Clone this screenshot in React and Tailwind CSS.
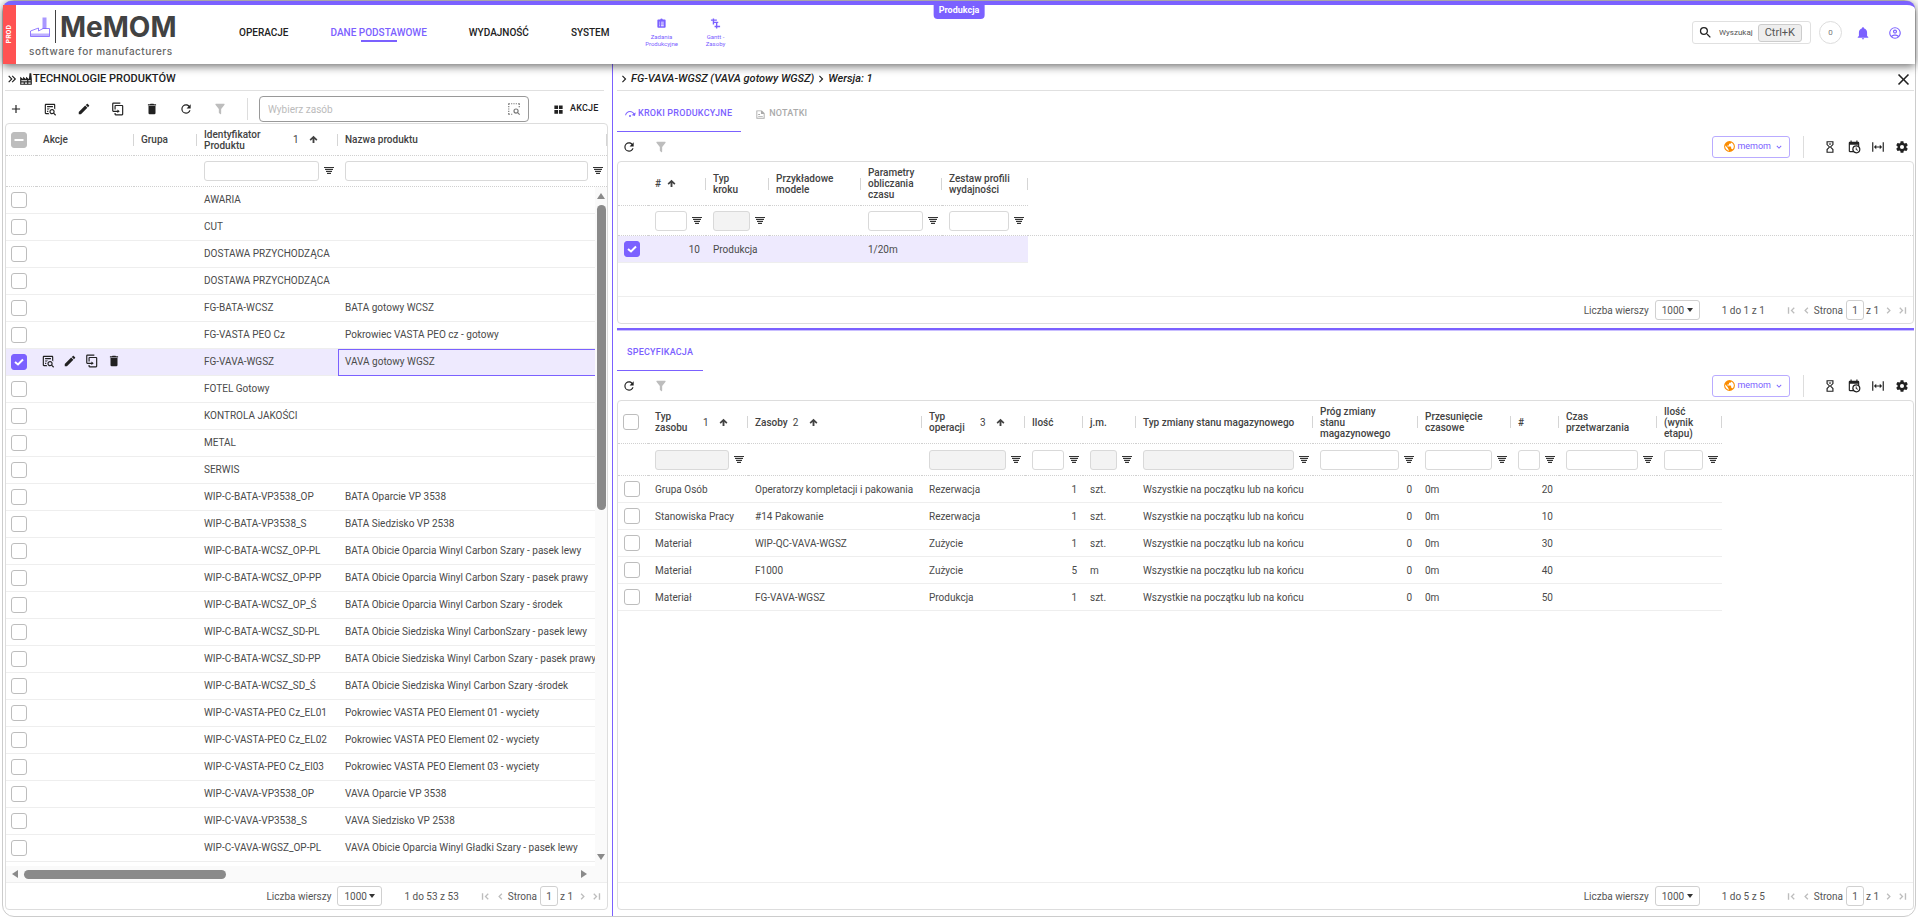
import React, { useState } from 'react';
import clsx from 'clsx';

const icons = {
  plus: 'M19,13H13V19H11V13H5V11H11V5H13V11H19V13Z',
  details:
    'M15.5,12C18,12 20,14 20,16.5C20,17.38 19.75,18.21 19.31,18.9L22.39,22L21,23.39L17.88,20.32C17.19,20.75 16.37,21 15.5,21C13,21 11,19 11,16.5C11,14 13,12 15.5,12M15.5,14A2.5,2.5 0 0,0 13,16.5A2.5,2.5 0 0,0 15.5,19A2.5,2.5 0 0,0 18,16.5A2.5,2.5 0 0,0 15.5,14M5,3H19C20.11,3 21,3.89 21,5V13.03C20.5,12.23 19.81,11.54 19,11V5H5V19H9.5C9.81,19.75 10.26,20.42 10.81,21H5C3.89,21 3,20.11 3,19V5C3,3.89 3.89,3 5,3M7,7H17V9H7V7M7,11H12.03C11.23,11.5 10.54,12.19 10,13H7V11M7,15H9.17C9.06,15.5 9,16 9,16.5V17H7V15Z',
  pencil:
    'M20.71,7.04C21.1,6.65 21.1,6 20.71,5.63L18.37,3.29C18,2.9 17.35,2.9 16.96,3.29L15.12,5.12L18.87,8.87M3,17.25V21H6.75L17.81,9.93L14.06,6.18L3,17.25Z',
  duplicate:
    'M11,17H4A2,2 0 0,1 2,15V3A2,2 0 0,1 4,1H16V3H4V15H11V13L15,16L11,19V17M19,21V7H8V13H6V7A2,2 0 0,1 8,5H19A2,2 0 0,1 21,7V21A2,2 0 0,1 19,23H8A2,2 0 0,1 6,21V19H8V21H19Z',
  trash: 'M19,4H15.5L14.5,3H9.5L8.5,4H5V6H19M6,19A2,2 0 0,0 8,21H16A2,2 0 0,0 18,19V7H6V19Z',
  refresh:
    'M17.65,6.35C16.2,4.9 14.21,4 12,4A8,8 0 0,0 4,12A8,8 0 0,0 12,20C15.73,20 18.84,17.45 19.73,14H17.65C16.83,16.33 14.61,18 12,18A6,6 0 0,1 6,12A6,6 0 0,1 12,6C13.66,6 15.14,6.69 16.22,7.78L13,11H20V4L17.65,6.35Z',
  filter:
    'M14,12V19.88C14.04,20.18 13.94,20.5 13.71,20.71C13.32,21.1 12.69,21.1 12.3,20.71L10.29,18.7C10.06,18.47 9.96,18.16 10,17.87V12H9.97L4.21,4.62C3.87,4.19 3.95,3.56 4.38,3.22C4.57,3.08 4.78,3 5,3H19C19.22,3 19.43,3.08 19.62,3.22C20.05,3.56 20.13,4.19 19.79,4.62L14.03,12H14Z',
  factory:
    'M4,18V20H8V18H4M4,14V16H14V14H4M10,18V20H14V18H10M16,14V16H20V14H16M16,18V20H20V18H16M2,22V8L7,12V8L12,12V8L17,12L18,2H21L22,12V22H2Z',
  bell: 'M21,19V20H3V19L5,17V11C5,7.9 7.03,5.17 10,4.29C10,4.19 10,4.1 10,4A2,2 0 0,1 12,2A2,2 0 0,1 14,4C14,4.1 14,4.19 14,4.29C16.97,5.17 19,7.9 19,11V17L21,19M14,21A2,2 0 0,1 12,23A2,2 0 0,1 10,21',
  account:
    'M12,2A10,10 0 0,0 2,12A10,10 0 0,0 12,22A10,10 0 0,0 22,12A10,10 0 0,0 12,2M7.07,18.28C7.5,17.38 10.12,16.5 12,16.5C13.88,16.5 16.5,17.38 16.93,18.28C15.57,19.36 13.86,20 12,20C10.14,20 8.43,19.36 7.07,18.28M18.36,16.83C16.93,15.09 13.46,14.5 12,14.5C10.54,14.5 7.07,15.09 5.64,16.83C4.62,15.5 4,13.82 4,12C4,7.59 7.59,4 12,4C16.41,4 20,7.59 20,12C20,13.82 19.38,15.5 18.36,16.83M12,6C10.06,6 8.5,7.56 8.5,9.5C8.5,11.44 10.06,13 12,13C13.94,13 15.5,11.44 15.5,9.5C15.5,7.56 13.94,6 12,6M12,11A1.5,1.5 0 0,1 10.5,9.5A1.5,1.5 0 0,1 12,8A1.5,1.5 0 0,1 13.5,9.5A1.5,1.5 0 0,1 12,11Z',
  cog: 'M12,15.5A3.5,3.5 0 0,1 8.5,12A3.5,3.5 0 0,1 12,8.5A3.5,3.5 0 0,1 15.5,12A3.5,3.5 0 0,1 12,15.5M19.43,12.97C19.47,12.65 19.5,12.33 19.5,12C19.5,11.67 19.47,11.34 19.43,11L21.54,9.37C21.73,9.22 21.78,8.95 21.66,8.73L19.66,5.27C19.54,5.05 19.27,4.96 19.05,5.05L16.56,6.05C16.04,5.66 15.5,5.32 14.87,5.07L14.5,2.42C14.46,2.18 14.25,2 14,2H10C9.75,2 9.54,2.18 9.5,2.42L9.13,5.07C8.5,5.32 7.96,5.66 7.44,6.05L4.95,5.05C4.73,4.96 4.46,5.05 4.34,5.27L2.34,8.73C2.21,8.95 2.27,9.22 2.46,9.37L4.57,11C4.53,11.34 4.5,11.67 4.5,12C4.5,12.33 4.53,12.65 4.57,12.97L2.46,14.63C2.27,14.78 2.21,15.05 2.34,15.27L4.34,18.73C4.46,18.95 4.73,19.03 4.95,18.95L7.44,17.94C7.96,18.34 8.5,18.68 9.13,18.93L9.5,21.58C9.54,21.82 9.75,22 10,22H14C14.25,22 14.46,21.82 14.5,21.58L14.87,18.93C15.5,18.67 16.04,18.34 16.56,17.94L19.05,18.95C19.27,19.03 19.54,18.95 19.66,18.73L21.66,15.27C21.78,15.05 21.73,14.78 21.54,14.63L19.43,12.97Z',
  earth:
    'M17.9,17.39C17.64,16.59 16.89,16 16,16H15V13A1,1 0 0,0 14,12H8V10H10A1,1 0 0,0 11,9V7H13A2,2 0 0,0 15,5V4.59C17.93,5.77 20,8.64 20,12C20,14.08 19.2,15.97 17.9,17.39M11,19.93C7.05,19.44 4,16.08 4,12C4,11.38 4.08,10.78 4.21,10.21L9,15V16A2,2 0 0,0 11,18M12,2A10,10 0 0,0 2,12A10,10 0 0,0 12,22A10,10 0 0,0 22,12A10,10 0 0,0 12,2Z',
  doubleChevron:
    'M5.59,7.41L7,6L13,12L7,18L5.59,16.59L10.17,12L5.59,7.41M11.59,7.41L13,6L19,12L13,18L11.59,16.59L16.17,12L11.59,7.41Z',
  chevronRight: 'M8.59,16.58L13.17,12L8.59,7.41L10,6L16,12L10,18L8.59,16.58Z',
  chevronDown: 'M7.41,8.58L12,13.17L16.59,8.58L18,10L12,16L6,10L7.41,8.58Z',
  grid: 'M3,11H11V3H3M3,21H11V13H3M13,21H21V13H13M13,3V11H21V3',
  magnify:
    'M9.5,3A6.5,6.5 0 0,1 16,9.5C16,11.11 15.41,12.59 14.44,13.73L14.71,14H15.5L20.5,19L19,20.5L14,15.5V14.71L13.73,14.44C12.59,15.41 11.11,16 9.5,16A6.5,6.5 0 0,1 3,9.5A6.5,6.5 0 0,1 9.5,3M9.5,5C7,5 5,7 5,9.5C5,12 7,14 9.5,14C12,14 14,12 14,9.5C14,7 12,5 9.5,5Z',
  close:
    'M19,6.41L17.59,5L12,10.59L6.41,5L5,6.41L10.59,12L5,17.59L6.41,19L12,13.41L17.59,19L19,17.59L13.41,12L19,6.41Z',
  width: 'M9,11H15V8L19,12L15,16V13H9V16L5,12L9,8V11M2,20V4H4V20H2M20,20V4H22V20H20Z',
  sand: 'M6,2H18V8L14,12L18,16V22H6V16L10,12L6,8V2M16,16.5L12,12.5L8,16.5V20H16V16.5M12,11.5L16,7.5V4H8V7.5L12,11.5M10,6H14V6.75L12,8.75L10,6.75V6Z',
  calendarClock:
    'M15,13H16.5V15.82L18.94,17.23L18.19,18.53L15,16.69V13M19,8H5V19H9.67C9.24,18.09 9,17.07 9,16A7,7 0 0,1 16,9C17.07,9 18.09,9.24 19,9.67V8M5,21C3.89,21 3,20.1 3,19V5C3,3.89 3.89,3 5,3H6V1H8V3H16V1H18V3H19A2,2 0 0,1 21,5V11.1C22.24,12.36 23,14.09 23,16A7,7 0 0,1 16,23C14.09,23 12.36,22.24 11.1,21H5M16,11.15A4.85,4.85 0 0,0 11.15,16C11.15,18.68 13.32,20.85 16,20.85A4.85,4.85 0 0,0 20.85,16C20.85,13.32 18.68,11.15 16,11.15Z',
  stepOver:
    'M12,14A2,2 0 0,1 14,16A2,2 0 0,1 12,18A2,2 0 0,1 10,16A2,2 0 0,1 12,14M23.46,8.86L21.87,15.75L15,14.16L18.8,11.78C17.39,9.5 14.87,8 12,8C8.05,8 4.77,10.86 4.12,14.63L2.15,14.28C2.96,9.58 7.06,6 12,6C15.58,6 18.73,7.89 20.5,10.72L23.46,8.86Z',
  note: 'M3,3H15L21,9V21H3V3M5,5V19H19V11H13V5H5M7,11H11V13H7V11M7,15H17V17H7V15Z',
  clipboard:
    'M19,3H14.8C14.4,1.8 13.3,1 12,1S9.6,1.8 9.2,3H5A2,2 0 0,0 3,5V19A2,2 0 0,0 5,21H19A2,2 0 0,0 21,19V5A2,2 0 0,0 19,3M7,8H9V10H7V8M7,12H9V14H7V12M7,16H9V18H7V16M17,18H11V16H17V18M17,14H11V12H17V14M17,10H11V8H17V10Z',
  gantt: 'M2,3H6V1H9V3H15V6H9V8H18V11H16V17H22V20H16V23H13V20H10V17H13V11H9V14H6V6H2V3Z',
  selectionSearch:
    'M2,2H5V4H4V5H2V2M7,2H9V4H7V2M11,2H13V4H11V2M15,2H17V4H15V2M19,2H22V5H20V4H19V2M2,7H4V9H2V7M2,11H4V13H2V11M2,15H4V17H2V15M2,19H4V20H5V22H2V19M7,20H9V22H7V20M20,7H22V9H20V7M15.5,11A4.5,4.5 0 0,1 20,15.5C20,16.4 19.7,17.2 19.3,17.9L22.4,21L21,22.4L17.9,19.3C17.2,19.7 16.4,20 15.5,20A4.5,4.5 0 0,1 11,15.5A4.5,4.5 0 0,1 15.5,11M15.5,13A2.5,2.5 0 0,0 13,15.5A2.5,2.5 0 0,0 15.5,18A2.5,2.5 0 0,0 18,15.5A2.5,2.5 0 0,0 15.5,13Z',
  arrowUp: 'M9.500,21V10.500L4.500,15L1.500,12L12,2L22.500,12L19.500,15L14.500,10.500V21Z',
  first: 'M4,5H7V19H4V5M19,7L14,12L19,17L17,19L10,12L17,5L19,7Z',
  prev: 'M16,7L11,12L16,17L14,19L7,12L14,5L16,7Z',
  next: 'M8,7L13,12L8,17L10,19L17,12L10,5L8,7Z',
  last: 'M20,5H17V19H20V5M5,7L10,12L5,17L7,19L14,12L7,5L5,7Z'
};

function Icon({ name, className = 'size-[14px]' }) {
  return (
    <svg viewBox="0 0 24 24" fill="currentColor" aria-hidden="true" className={clsx('shrink-0', className)}>
      <path d={icons[name]} />
    </svg>
  );
}

function IconButton({ name, label, className = 'w-[34px]', size, disabled = false }) {
  return (
    <button
      aria-label={label}
      disabled={disabled}
      className={clsx('flex h-6 shrink-0 items-center justify-center', disabled ? 'text-[#bdbdbd]' : 'text-[#212121]', className)}>
      <Icon name={name} className={size} />
    </button>
  );
}

function CheckBox({ label, defaultChecked = false, mixed = false }) {
  const [checked, setChecked] = useState(defaultChecked);
  return (
    <span className="relative block size-4">
      <input
        type="checkbox"
        aria-label={label}
        checked={checked}
        onChange={(e) => setChecked(e.target.checked)}
        className={clsx(
          'block size-4 appearance-none rounded-[3px] border',
          mixed ? 'border-[#bdbdbd] bg-[#bdbdbd]' : checked ? 'border-[#7b61ff] bg-[#7b61ff]' : 'border-[#bdbdbd] bg-white'
        )}
      />
      {(mixed || checked) && (
        <svg viewBox="0 0 16 16" fill="none" stroke="white" strokeWidth="2" className="pointer-events-none absolute inset-0">
          <path d={mixed ? 'M3.500 8H12.500' : 'M4 8L7 10.500L12 5.500'} />
        </svg>
      )}
    </span>
  );
}

function FilterLines() {
  return (
    <svg viewBox="0 0 10 8" className="h-2 w-[10px] shrink-0" fill="#333" aria-hidden="true" shapeRendering="crispEdges">
      <path d="M0 0H10V1H0ZM1 2H9V3H1ZM2 4H8V5H2ZM3 6H7V7H3Z" />
      <path d="M1 1H9V2H1ZM2 3H8V4H2ZM3 5H7V6H3Z" opacity="0.2" />
    </svg>
  );
}

// column: w - width class, label, order - sort order, filter - 'text' | 'set'
function DataGrid({ columns, rows, headHeight, filterHeight, selectAll, lastWide = false, focusCell, textClass = '' }) {
  const span = (i) => (lastWide && i === columns.length - 1 ? 2 : 1);
  return (
    <table className="w-full table-fixed border-separate border-spacing-0 text-[10px] leading-[11px] text-[#4a4a4a]">
      <colgroup>
        <col className="w-[30px]" />
        {columns.map((c, i) => (
          <col key={i} className={c.w} />
        ))}
        <col className={lastWide ? 'w-3' : ''} />
      </colgroup>
      <thead>
        <tr className={headHeight}>
          <th className="border-b border-dotted border-[#d0d0d0] p-0 pl-[5px]">{selectAll}</th>
          {columns.map((c, i) => (
            <th key={i} colSpan={span(i)} className="border-b border-dotted border-[#d0d0d0] p-0 text-left font-medium text-[#424242]">
              <div className="flex items-center">
                <div className="flex min-w-0 grow items-center pl-[7px]">
                  <span className={clsx('whitespace-pre', c.wrap && 'grow')}>{c.label}</span>
                  {c.order && <span className={clsx('ml-[5px] font-normal', c.wrap ? 'w-4' : 'w-[10px]')}>{c.order}</span>}
                  {c.sort && <Icon name="arrowUp" className={clsx('size-[9px]', c.wrap ? 'mr-[19px]' : 'ml-[6px]')} />}
                </div>
                <span className="h-3 w-px bg-[#d5d5d5]" />
              </div>
            </th>
          ))}
          {!lastWide && <th />}
        </tr>
        <tr className={filterHeight}>
          <td className="border-b border-dotted border-[#d0d0d0]" />
          {columns.map((c, i) => (
            <td key={i} colSpan={span(i)} className="border-b border-dotted border-[#d0d0d0] p-0 pr-1 pl-[7px]">
              {c.filter && (
                <div className="flex items-center gap-[5px]">
                  <input
                    aria-label={`Filtr ${c.label}`}
                    disabled={c.filter === 'set'}
                    className={clsx(
                      'h-5 w-full min-w-0 rounded-[3px] border border-[#d9d9d9] px-1',
                      c.filter === 'set' ? 'bg-[#f3f3f3]' : 'bg-white'
                    )}
                  />
                  <FilterLines />
                </div>
              )}
            </td>
          ))}
          {!lastWide && <td className="border-b border-dotted border-[#d0d0d0]" />}
        </tr>
      </thead>
      <tbody>
        {rows.map((row, r) => (
          <tr key={r} className="h-[27px]">
            <td className={clsx('border-b border-[#eee] p-0', lastWide ? 'pl-[5px]' : 'pl-[6px]', row.selected && 'bg-[#eeeafe]')}>
              <CheckBox label={`Zaznacz wiersz ${r + 1}`} defaultChecked={row.selected} />
            </td>
            {columns.map((c, i) => (
              <td
                key={i}
                className={clsx(
                  'border-b p-0 whitespace-nowrap',
                  c.right && 'pr-[6px] text-right',
                  textClass,
                  row.selected && 'bg-[#eeeafe]',
                  row.selected && focusCell === i ? 'border-t border-l border-[#7b61ff] pl-[6px]' : 'border-[#eee] pl-[7px]'
                )}>
                {row.cells[i]}
              </td>
            ))}
            <td className="p-0" />
          </tr>
        ))}
      </tbody>
    </table>
  );
}

function Pagination({ range }) {
  return (
    <div className="flex h-[27px] shrink-0 items-center justify-end border-t border-[#eee] pr-[5px] text-[10px] text-[#555]">
      <label className="flex items-center gap-[6px]">
        Liczba wierszy
        <span className="relative flex items-center">
          <select className="h-5 w-[45px] appearance-none rounded-[3px] border border-[#d0d0d0] bg-white pl-[6px] text-[10px]">
            <option>1000</option>
          </select>
          <svg viewBox="0 0 6 4" className="pointer-events-none absolute right-[7px] h-1 w-[6px]" fill="#333">
            <path d="M0 0H6L3 4Z" />
          </svg>
        </span>
      </label>
      <span className="ml-[22px]">{range}</span>
      <div className="ml-[19px] flex items-center">
        <button aria-label="Pierwsza strona" className="px-[2px] text-[#bdbdbd]">
          <Icon name="first" className="size-[11px]" />
        </button>
        <button aria-label="Poprzednia strona" className="px-[2px] text-[#bdbdbd]">
          <Icon name="prev" className="size-[11px]" />
        </button>
        <label className="flex items-center gap-[3px]">
          Strona
          <input defaultValue="1" className="h-5 w-[18px] rounded-[3px] border border-[#d0d0d0] text-center text-[10px]" />
        </label>
        <span className="mx-[2px]">z 1</span>
        <button aria-label="Następna strona" className="px-[2px] text-[#bdbdbd]">
          <Icon name="next" className="size-[11px]" />
        </button>
        <button aria-label="Ostatnia strona" className="pl-px text-[#bdbdbd]">
          <Icon name="last" className="size-[11px]" />
        </button>
      </div>
    </div>
  );
}

function Header() {
  const menu = ['OPERACJE', 'DANE PODSTAWOWE', 'WYDAJNOŚĆ', 'SYSTEM'];
  return (
    <header className="relative z-10 flex h-[63px] shrink-0 rounded-t-lg border-t-4 border-[#7b61ff] bg-white shadow-[0_2px_10px_rgba(0,0,0,0.6)]">
      <div className="flex w-[13px] items-center justify-center bg-[#ff5252]">
        <span className="rotate-180 text-[7px] font-bold text-white [writing-mode:vertical-rl]">PROD</span>
      </div>
      <a href="#" className="ml-[13px] flex w-[152px] flex-col pt-[5px] text-[#424242]">
        <span className="flex h-[33px] items-center">
          <svg viewBox="0 0 20 20" className="ml-px size-5 text-[#7b61ff]" fill="none" stroke="currentColor">
            <path d="M0.500 19.500V14L8.500 11V14L13 11.500H19.500V19.500Z" strokeWidth="0.800" />
            <path d="M0.500 18H19.500" strokeWidth="3" opacity="0.5" />
            <path d="M14.500 0.500V12" strokeWidth="4" opacity="0.65" />
          </svg>
          <span className="ml-[5px] h-[33px] w-px bg-[#424242]" />
          <span className="ml-1 font-[Inter] text-[28px] leading-none font-bold">MeMOM</span>
        </span>
        <span className="font-[Inter] text-[10px] leading-[17px] font-medium tracking-wider whitespace-nowrap text-[#666]">
          software for manufacturers
        </span>
      </a>
      <nav className="ml-[58px] flex items-center gap-[42px] pb-1 text-[10px] font-medium text-[#212121]">
        {menu.map((m, i) => (
          <a key={m} href="#" className={clsx('relative', i === 1 && 'text-[#7b61ff]')}>
            {m}
            {i === 1 && <span className="absolute top-full left-[30px] h-[2px] w-9 bg-[#7b61ff]" />}
          </a>
        ))}
        <div className="-ml-2 flex gap-5 text-center text-[6px] leading-[7px] font-normal text-[#7b61ff]">
          <a href="#" className="flex w-9 flex-col items-center gap-1">
            <Icon name="clipboard" className="size-[11px]" />
            Zadania Produkcyjne
          </a>
          <a href="#" className="flex w-8 flex-col items-center gap-1">
            <Icon name="gantt" className="size-[11px]" />
            <span>
              Gantt -<br />
              Zasoby
            </span>
          </a>
        </div>
      </nav>
      <span className="absolute -top-1 left-1/2 -translate-x-1/2 rounded-b-sm bg-[#7b61ff] px-[5px] pt-[2px] pb-px text-[9px] leading-[15px] font-bold text-white">
        Produkcja
      </span>
      <div className="mb-1 ml-auto flex items-center pr-[13px]">
        <button className="flex h-[23px] items-center rounded-[3px] border border-[#e0e0e0] pr-[8px] pl-[5px] text-[#212121]">
          <Icon name="magnify" className="size-[15px]" />
          <span className="ml-[6px] text-[8px] text-[#555]">Wyszukaj</span>
          <kbd className="ml-[5px] rounded-[3px] border border-[#ccc] bg-[#eee] px-[6px] font-[Roboto] text-[11px] leading-4 text-[#555]">
            Ctrl+K
          </kbd>
        </button>
        <span className="ml-2 flex size-[23px] items-center justify-center rounded-full border border-[#ddd] text-[8px] text-[#777]">0</span>
        <button aria-label="Powiadomienia" className="ml-[14px] text-[#7b61ff]">
          <Icon name="bell" />
        </button>
        <button aria-label="Konto" className="ml-[18px] text-[#7b61ff]">
          <Icon name="account" />
        </button>
      </div>
    </header>
  );
}

const names = [
  ['AWARIA'],
  ['CUT'],
  ['DOSTAWA PRZYCHODZĄCA'],
  ['DOSTAWA PRZYCHODZĄCA'],
  ['FG-BATA-WCSZ', 'BATA gotowy WCSZ'],
  ['FG-VASTA PEO Cz', 'Pokrowiec VASTA PEO cz - gotowy'],
  ['FG-VAVA-WGSZ', 'VAVA gotowy WGSZ'],
  ['FOTEL Gotowy'],
  ['KONTROLA JAKOŚCI'],
  ['METAL'],
  ['SERWIS'],
  ['WIP-C-BATA-VP3538_OP', 'BATA Oparcie VP 3538'],
  ['WIP-C-BATA-VP3538_S', 'BATA Siedzisko VP 2538'],
  ['WIP-C-BATA-WCSZ_OP-PL', 'BATA Obicie Oparcia Winyl Carbon Szary - pasek lewy'],
  ['WIP-C-BATA-WCSZ_OP-PP', 'BATA Obicie Oparcia Winyl Carbon Szary - pasek prawy'],
  ['WIP-C-BATA-WCSZ_OP_Ś', 'BATA Obicie Oparcia Winyl Carbon Szary - środek'],
  ['WIP-C-BATA-WCSZ_SD-PL', 'BATA Obicie Siedziska Winyl CarbonSzary - pasek lewy'],
  ['WIP-C-BATA-WCSZ_SD-PP', 'BATA Obicie Siedziska Winyl Carbon Szary - pasek prawy'],
  ['WIP-C-BATA-WCSZ_SD_Ś', 'BATA Obicie Siedziska Winyl Carbon Szary -środek'],
  ['WIP-C-VASTA-PEO Cz_EL01', 'Pokrowiec VASTA PEO Element 01 - wyciety'],
  ['WIP-C-VASTA-PEO Cz_EL02', 'Pokrowiec VASTA PEO Element 02 - wyciety'],
  ['WIP-C-VASTA-PEO Cz_El03', 'Pokrowiec VASTA PEO Element 03 - wyciety'],
  ['WIP-C-VAVA-VP3538_OP', 'VAVA Oparcie VP 3538'],
  ['WIP-C-VAVA-VP3538_S', 'VAVA Siedzisko VP 2538'],
  ['WIP-C-VAVA-WGSZ_OP-PL', 'VAVA Obicie Oparcia Winyl Gładki Szary - pasek lewy']
];

const rowActions = (
  <div className="-ml-[2px] flex gap-2 text-[#212121]">
    <button aria-label="Szczegóły">
      <Icon name="details" />
    </button>
    <button aria-label="Edytuj">
      <Icon name="pencil" />
    </button>
    <button aria-label="Duplikuj">
      <Icon name="duplicate" />
    </button>
    <button aria-label="Usuń">
      <Icon name="trash" />
    </button>
  </div>
);

const productRows = names.map(([id, name], i) => ({
  selected: i === 6,
  cells: [i === 6 ? rowActions : '', '', id, name]
}));

const productColumns = [
  { w: 'w-[98px]', label: 'Akcje' },
  { w: 'w-[63px]', label: 'Grupa' },
  { w: 'w-[141px]', label: 'Identyfikator\nProduktu', order: 1, sort: true, wrap: true, filter: 'text' },
  { w: '', label: 'Nazwa produktu', filter: 'text' }
];

const stepColumns = [
  { w: 'w-[58px]', label: '#', sort: true, filter: 'text', right: true },
  { w: 'w-[63px]', label: 'Typ\nkroku', filter: 'set' },
  { w: 'w-[92px]', label: 'Przykładowe\nmodele' },
  { w: 'w-[81px]', label: 'Parametry\nobliczania\nczasu', filter: 'text' },
  { w: 'w-[86px]', label: 'Zestaw profili\nwydajności', filter: 'text' }
];

const stepRows = [{ selected: true, cells: ['10', 'Produkcja', '', '1/20m', ''] }];

const specColumns = [
  { w: 'w-[100px]', label: 'Typ\nzasobu', order: 1, sort: true, wrap: true, filter: 'set' },
  { w: 'w-[174px]', label: 'Zasoby', order: 2, sort: true },
  { w: 'w-[103px]', label: 'Typ\noperacji', order: 3, sort: true, wrap: true, filter: 'set' },
  { w: 'w-[58px]', label: 'Ilość', filter: 'text', right: true },
  { w: 'w-[53px]', label: 'j.m.', filter: 'set' },
  { w: 'w-[177px]', label: 'Typ zmiany stanu magazynowego', filter: 'set' },
  { w: 'w-[105px]', label: 'Próg zmiany\nstanu\nmagazynowego', filter: 'text', right: true },
  { w: 'w-[93px]', label: 'Przesunięcie\nczasowe', filter: 'text' },
  { w: 'w-[48px]', label: '#', filter: 'text', right: true },
  { w: 'w-[98px]', label: 'Czas\nprzetwarzania', filter: 'text' },
  { w: 'w-[65px]', label: 'Ilość\n(wynik\netapu)', filter: 'text' }
];

const stock = 'Wszystkie na początku lub na końcu';
const specRows = [
  ['Grupa Osób', 'Operatorzy kompletacji i pakowania', 'Rezerwacja', '1', 'szt.', stock, '0', '0m', '20'],
  ['Stanowiska Pracy', '#14 Pakowanie', 'Rezerwacja', '1', 'szt.', stock, '0', '0m', '10'],
  ['Materiał', 'WIP-QC-VAVA-WGSZ', 'Zużycie', '1', 'szt.', stock, '0', '0m', '30'],
  ['Materiał', 'F1000', 'Zużycie', '5', 'm', stock, '0', '0m', '40'],
  ['Materiał', 'FG-VAVA-WGSZ', 'Produkcja', '1', 'szt.', stock, '0', '0m', '50']
].map((cells) => ({ cells }));

function ProductsPanel() {
  return (
    <section className="flex w-[610px] shrink-0 flex-col border-r border-[#7b61ff] pb-[6px] pl-[2px]">
      <h1 className="mr-[8px] flex h-[27px] shrink-0 items-center border-b border-[#e0e0e0] pt-1 text-[11px] font-medium text-[#212121]">
        <Icon name="doubleChevron" />
        <Icon name="factory" />
        TECHNOLOGIE PRODUKTÓW
      </h1>
      <div className="flex h-8 shrink-0 items-center pt-1">
        <div className="-ml-[6px] flex">
          <IconButton name="plus" label="Dodaj" />
          <IconButton name="details" label="Szczegóły" />
          <IconButton name="pencil" label="Edytuj" />
          <IconButton name="duplicate" label="Duplikuj" />
          <IconButton name="trash" label="Usuń" />
          <IconButton name="refresh" label="Odśwież" />
          <IconButton name="filter" label="Wyczyść filtry" disabled />
        </div>
        <span className="ml-[10px] h-[22px] w-px bg-[#ddd]" />
        <div className="relative ml-[11px]">
          <input
            aria-label="Wybierz zasób"
            placeholder="Wybierz zasób"
            className="block h-[26px] w-[270px] rounded border border-[#999] pr-7 pl-2 text-[10px] placeholder:text-[#bbb]"
          />
          <Icon name="selectionSearch" className="absolute top-[6px] right-2 size-[14px] text-[#777]" />
        </div>
        <button className="ml-6 flex items-center gap-[6px] text-[9px] font-medium tracking-wide text-[#212121]">
          <Icon name="grid" className="size-[11px]" />
          AKCJE
        </button>
      </div>
      <div className="mr-1 flex min-h-0 grow flex-col rounded border border-[#ddd]">
        <div className="relative min-h-0 grow overflow-hidden">
          <DataGrid
            columns={productColumns}
            rows={productRows}
            headHeight="h-8"
            filterHeight="h-[31px]"
            selectAll={<CheckBox label="Zaznacz wszystkie" mixed />}
            lastWide
            focusCell={3}
            textClass="pb-[2px]"
          />
          <div className="absolute top-[63px] right-0 bottom-4 flex w-3 flex-col items-center bg-[#fafafa] text-[#8a8a8a]">
            <svg viewBox="0 0 8 6" className="mt-[6px] h-[6px] w-2 shrink-0" fill="currentColor">
              <path d="M4 0L8 6H0Z" />
            </svg>
            <div className="mt-[6px] mb-auto h-[305px] w-[9px] rounded-full bg-[#8a8a8a]" />
            <svg viewBox="0 0 8 6" className="mb-[6px] h-[6px] w-2 shrink-0" fill="currentColor">
              <path d="M0 0H8L4 6Z" />
            </svg>
          </div>
          <div className="absolute right-0 bottom-0 left-0 flex h-4 items-center bg-[#fafafa] pr-5 pl-[6px] text-[#8a8a8a]">
            <svg viewBox="0 0 6 8" className="h-2 w-[6px]" fill="currentColor">
              <path d="M6 0V8L0 4Z" />
            </svg>
            <div className="mr-auto ml-[6px] h-[9px] w-[202px] rounded-full bg-[#8a8a8a]" />
            <svg viewBox="0 0 6 8" className="h-2 w-[6px]" fill="currentColor">
              <path d="M0 0L6 4L0 8Z" />
            </svg>
          </div>
        </div>
        <Pagination range="1 do 53 z 53" />
      </div>
    </section>
  );
}

function GridToolbar() {
  return (
    <div className="flex h-[29px] shrink-0 items-center">
      <IconButton name="refresh" label="Odśwież" className="w-6" />
      <IconButton name="filter" label="Wyczyść filtry" className="ml-2 w-6" disabled />
      <button className="ml-auto flex h-[22px] items-center rounded-[3px] border border-[#b9abff] pr-[5px] pl-[10px] text-[9px] text-[#7b61ff]">
        <Icon name="earth" className="size-[13px] text-[#fb8c00]" />
        <span className="mr-[3px] ml-px">memom</span>
        <Icon name="chevronDown" className="size-[10px]" />
      </button>
      <span className="ml-[13px] h-[22px] w-px bg-[#ddd]" />
      <div className="ml-[14px] flex">
        <IconButton name="sand" label="Historia" className="w-6" />
        <IconButton name="calendarClock" label="Kalendarz" className="w-6" />
        <IconButton name="width" label="Dopasuj kolumny" className="w-6" />
        <IconButton name="cog" label="Ustawienia" className="w-6" />
      </div>
    </div>
  );
}

function DetailsPanel() {
  return (
    <section className="flex min-w-0 grow flex-col pr-[1px] pb-[6px] pl-1">
      <div className="flex h-[27px] shrink-0 items-center border-b border-[#e0e0e0] pt-1 text-[11px] font-medium text-[#212121] italic">
        <Icon name="chevronRight" />
        FG-VAVA-WGSZ (VAVA gotowy WGSZ)
        <Icon name="chevronRight" />
        Wersja: 1
        <button aria-label="Zamknij" className="mr-px ml-auto">
          <Icon name="close" className="size-[19px]" />
        </button>
      </div>
      <div role="tablist" className="flex h-[41px] shrink-0 text-[9px] font-medium tracking-wide">
        <button
          role="tab"
          aria-selected="true"
          className="flex items-center gap-[2px] border-b border-[#7b61ff] pt-[5px] pr-[9px] pl-[7px] text-[#7b61ff]">
          <Icon name="stepOver" className="size-[12px]" />
          KROKI PRODUKCYJNE
        </button>
        <button role="tab" aria-selected="false" className="flex items-center gap-[3px] px-[14px] pt-[5px] text-[#aaa]">
          <Icon name="note" className="size-[11px]" />
          NOTATKI
        </button>
      </div>
      <GridToolbar />
      <div className="flex h-[163px] shrink-0 flex-col rounded border border-[#ddd]">
        <div className="min-h-0 grow overflow-hidden">
          <DataGrid columns={stepColumns} rows={stepRows} headHeight="h-11" filterHeight="h-[30px]" />
        </div>
        <Pagination range="1 do 1 z 1" />
      </div>
      <div className="mt-1 h-[3px] shrink-0 border-b border-[#c9beff] bg-[#7b61ff]" />
      <div role="tablist" className="flex h-10 shrink-0 text-[9px] font-medium tracking-wide">
        <button role="tab" aria-selected="true" className="border-b border-[#7b61ff] px-[10px] pt-[5px] text-[#7b61ff]">
          SPECYFIKACJA
        </button>
      </div>
      <GridToolbar />
      <div className="flex min-h-0 grow flex-col rounded border border-[#ddd]">
        <div className="min-h-0 grow overflow-hidden">
          <DataGrid
            columns={specColumns}
            rows={specRows}
            headHeight="h-[43px]"
            filterHeight="h-8"
            selectAll={<CheckBox label="Zaznacz wszystkie" />}
          />
        </div>
        <Pagination range="1 do 5 z 5" />
      </div>
    </section>
  );
}

export default function App() {
  return (
    <div className="h-screen bg-white px-[2px] pb-px font-[Roboto,sans-serif]">
      <div className="flex h-full flex-col rounded-xl border border-[#ccc]">
        <Header />
        <main className="flex min-h-0 grow">
          <ProductsPanel />
          <DetailsPanel />
        </main>
      </div>
    </div>
  );
}
